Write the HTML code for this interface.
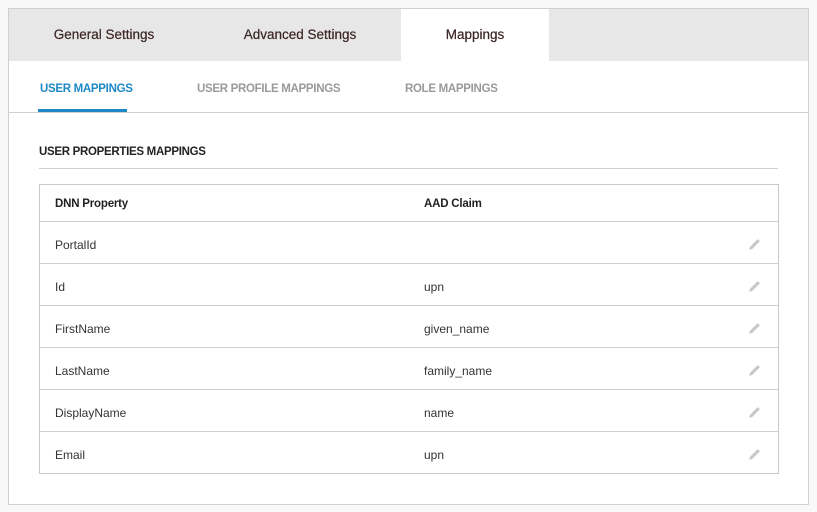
<!DOCTYPE html>
<html><head><style>
body{margin:0;background:#f8f8f8;font-family:"Liberation Sans",sans-serif;width:817px;height:512px;overflow:hidden;position:relative}
.frame{position:absolute;left:8px;top:8px;width:799px;height:495px;border:1px solid #d0d0d0;background:#fff}
.tabs{position:absolute;left:0;top:0;width:799px;height:52px;background:#e6e7e6}
.tab{position:absolute;top:0;height:52px;line-height:52px;font-size:13.5px;color:#3b2525;text-align:center;-webkit-text-stroke:0.2px #3b2525}
.sub{position:absolute;top:74px;font-size:11.5px;font-weight:bold;color:#9a9a9a;letter-spacing:-0.3px}
.t{position:absolute;font-size:12px;color:#333}
.pen{position:absolute;left:748px;width:13px;height:13px}
</style></head><body>
<div class="frame">
<div class="tabs">
<div class="tab" style="left:0;width:190px">General Settings</div>
<div class="tab" style="left:190px;width:202px">Advanced Settings</div>
<div class="tab" style="left:392px;width:148px;background:#fff">Mappings</div>
</div>
<div class="sub" style="left:31px;color:#1e88c7">USER MAPPINGS</div>
<div style="position:absolute;left:29px;top:100px;width:89px;height:3px;background:#1e88c7"></div>
<div class="sub" style="left:188px">USER PROFILE MAPPINGS</div>
<div class="sub" style="left:396px">ROLE MAPPINGS</div>
<div style="position:absolute;left:0;top:103px;width:799px;height:1px;background:#d0d0d0"></div>
<div class="t" style="left:30px;top:137px;font-weight:bold;color:#222;font-size:11.5px;letter-spacing:-0.3px">USER PROPERTIES MAPPINGS</div>
<div style="position:absolute;left:30px;top:159px;width:739px;height:1px;background:#d0d0d0"></div>
<div style="position:absolute;left:30px;top:175px;width:738px;height:288px;border:1px solid #c8c8c8"></div>
<div class="t" style="left:46px;top:189px;font-weight:bold;color:#222;font-size:11.5px;letter-spacing:-0.2px">DNN Property</div>
<div class="t" style="left:415px;top:189px;font-weight:bold;color:#222;font-size:11.5px;letter-spacing:-0.2px">AAD Claim</div>
</div>
<div style="position:absolute;left:0;top:0">
<div style="position:absolute;left:40px;top:221px;width:738px;height:1px;background:#d0d0d0"></div>
<div class="t" style="left:55px;top:238px">PortalId</div>
<svg class="pen" style="top:238px" viewBox="0 0 12 12"><path d="M1 11 L2 8 L9 1 L11 3 L4 10 Z" fill="#c8c8c8"/></svg>
<div style="position:absolute;left:40px;top:263px;width:738px;height:1px;background:#d0d0d0"></div>
<div class="t" style="left:55px;top:280px">Id</div><div class="t" style="left:424px;top:280px">upn</div>
<svg class="pen" style="top:280px" viewBox="0 0 12 12"><path d="M1 11 L2 8 L9 1 L11 3 L4 10 Z" fill="#c8c8c8"/></svg>
<div style="position:absolute;left:40px;top:305px;width:738px;height:1px;background:#d0d0d0"></div>
<div class="t" style="left:55px;top:322px">FirstName</div><div class="t" style="left:424px;top:322px">given_name</div>
<svg class="pen" style="top:322px" viewBox="0 0 12 12"><path d="M1 11 L2 8 L9 1 L11 3 L4 10 Z" fill="#c8c8c8"/></svg>
<div style="position:absolute;left:40px;top:347px;width:738px;height:1px;background:#d0d0d0"></div>
<div class="t" style="left:55px;top:364px">LastName</div><div class="t" style="left:424px;top:364px">family_name</div>
<svg class="pen" style="top:364px" viewBox="0 0 12 12"><path d="M1 11 L2 8 L9 1 L11 3 L4 10 Z" fill="#c8c8c8"/></svg>
<div style="position:absolute;left:40px;top:389px;width:738px;height:1px;background:#d0d0d0"></div>
<div class="t" style="left:55px;top:406px">DisplayName</div><div class="t" style="left:424px;top:406px">name</div>
<svg class="pen" style="top:406px" viewBox="0 0 12 12"><path d="M1 11 L2 8 L9 1 L11 3 L4 10 Z" fill="#c8c8c8"/></svg>
<div style="position:absolute;left:40px;top:431px;width:738px;height:1px;background:#d0d0d0"></div>
<div class="t" style="left:55px;top:448px">Email</div><div class="t" style="left:424px;top:448px">upn</div>
<svg class="pen" style="top:448px" viewBox="0 0 12 12"><path d="M1 11 L2 8 L9 1 L11 3 L4 10 Z" fill="#c8c8c8"/></svg>
</div>
</body></html>
